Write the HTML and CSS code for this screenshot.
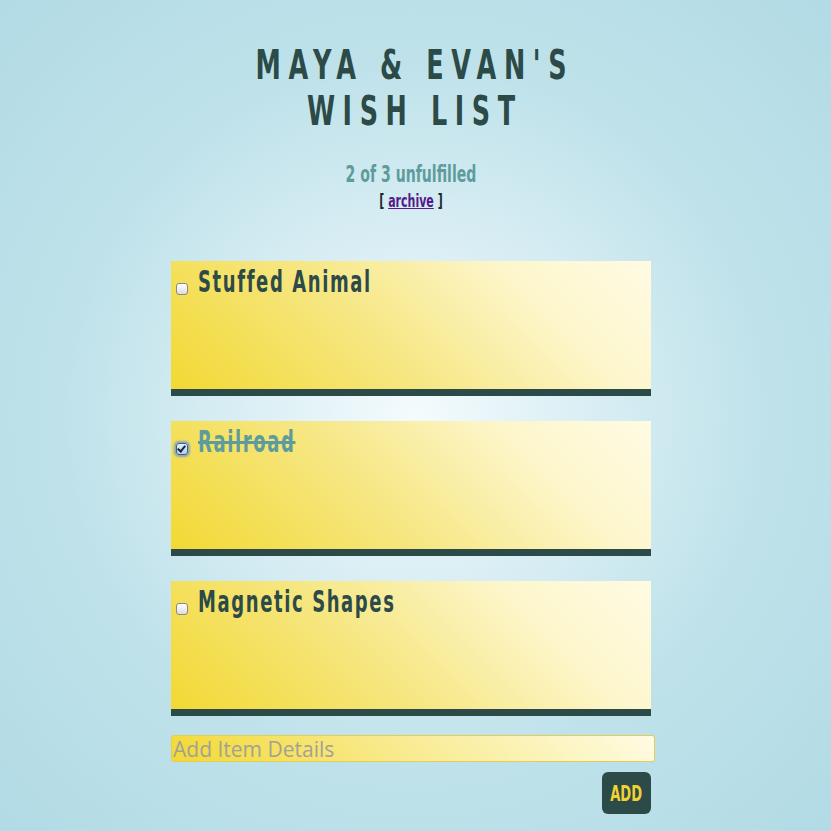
FILE: index.html
```html
<!DOCTYPE html>
<html>
<head>
<meta charset="utf-8">
<link rel="stylesheet" href="styles.css">
</head>
<body>
<div class="page">
  <h1 class="title">MAYA &amp; EVAN'S<br>WISH LIST</h1>
  <div class="count">2 of 3 unfulfilled</div>
  <div class="archive">[ <a href="#" class="archive-link">archive</a> ]</div>
  <ul class="items">
    <li class="item">
      <input type="checkbox" class="check">
      <span class="name">Stuffed Animal</span>
    </li>
    <li class="item done">
      <input type="checkbox" class="check" checked>
      <span class="name">Railroad</span>
    </li>
    <li class="item">
      <input type="checkbox" class="check">
      <span class="name">Magnetic Shapes</span>
    </li>
  </ul>
  <form class="add-form">
    <input type="text" class="details" placeholder="Add Item Details">
    <div class="actions"><button type="button" class="add"><span class="add-label">ADD</span></button></div>
  </form>
</div>
</body>
</html>
```

FILE: styles.css
```css
html, body {
  margin: 0;
  padding: 0;
  height: 100%;
}
body {
  background: radial-gradient(circle at 50% 50%, #f4fbfd 0%, #d9eef4 30%, #bfe2ea 60%, #b2dbe5 100%);
  font-family: "DejaVu Sans Condensed", "DejaVu Sans", sans-serif;
  font-stretch: condensed;
  color: #2c4a48;
}
.page {
  width: 480px;
  margin-left: calc(50% - 244.5px);
  padding-top: 42px;
  display: flex;
  flex-direction: column;
  align-items: stretch;
}
.title {
  margin: 0;
  text-align: center;
  font-size: 41px;
  line-height: 46px;
  font-weight: bold;
  letter-spacing: 11px;
  padding-left: 11px;
  white-space: nowrap;
  color: #2c4a48;
  transform: scaleX(0.69);
  transform-origin: 50% 50%;
}
.count {
  margin-top: 27px;
  text-align: center;
  font-size: 23px;
  line-height: 26px;
  font-weight: bold;
  color: #5e9c9c;
  white-space: nowrap;
  transform: scaleX(0.68);
}
.archive {
  text-align: center;
  font-size: 17px;
  line-height: 20px;
  font-weight: bold;
  color: #1e2a2a;
  margin-top: 4px;
  white-space: nowrap;
  transform: scaleX(0.72);
}
.archive-link {
  color: #551a8b;
}
.items {
  list-style: none;
  margin: 50px 0 0 0;
  padding: 0;
  display: flex;
  flex-direction: column;
  gap: 25px;
}
.item {
  height: 128px;
  border-bottom: 7px solid #2c4a48;
  background: linear-gradient(45deg, #f2d933 0%, #f6e680 40%, #fdf6cc 75%, #fffbe3 100%);
  display: flex;
  align-items: flex-start;
  padding: 0 0 0 5px;
}
.check {
  appearance: none;
  -webkit-appearance: none;
  position: relative;
  box-sizing: border-box;
  margin: 22px 10px 0 0;
  width: 12px;
  height: 12px;
  border: 1px solid #8a8a80;
  border-radius: 3px;
  background: linear-gradient(#ffffff, #dcdcdc);
  flex: none;
}
.check:checked {
  border-color: #3e5f8a;
  background: linear-gradient(#e4eefa, #b6cdea);
  box-shadow: 0 0 2px 2px rgba(100, 150, 215, 0.75);
}
.check:checked::after {
  content: "";
  position: absolute;
  left: 2px;
  top: 0px;
  width: 3px;
  height: 6px;
  border-right: 2px solid #14243c;
  border-bottom: 2px solid #14243c;
  transform: rotate(40deg);
}
.name {
  display: inline-block;
  margin-top: 3px;
  font-size: 31px;
  line-height: 34px;
  font-weight: bold;
  letter-spacing: 2.5px;
  color: #2c4a48;
  white-space: nowrap;
  transform: scaleX(0.645);
  transform-origin: 0 50%;
}
.done .name {
  color: #5e9c9c;
  text-decoration: line-through;
}
.add-form {
  margin: 19px 0 0 0;
  display: flex;
  flex-direction: column;
}
.details {
  width: 484px;
  height: 27px;
  box-sizing: border-box;
  border: 1px solid #e6cc55;
  border-radius: 3px;
  background: linear-gradient(45deg, #f2d933 0%, #f8ea8c 45%, #fffbe3 100%);
  font-family: "Open Sans", "Liberation Sans", sans-serif;
  font-stretch: normal;
  font-size: 21px;
  padding: 0 1px;
  color: #333;
}
.details::placeholder {
  color: #a3a196;
}
.actions {
  display: flex;
  justify-content: flex-end;
  margin-top: 10px;
}
.add {
  width: 49px;
  height: 42px;
  border: none;
  border-radius: 6px;
  background: #2c4a48;
  color: #f2d233;
  font-family: "DejaVu Sans Condensed", "DejaVu Sans", sans-serif;
  font-stretch: condensed;
  font-weight: bold;
  font-size: 22px;
  padding: 0;
  display: flex;
  align-items: center;
  justify-content: center;
}
.add-label {
  display: inline-block;
  transform: scaleX(0.66);
}
```
